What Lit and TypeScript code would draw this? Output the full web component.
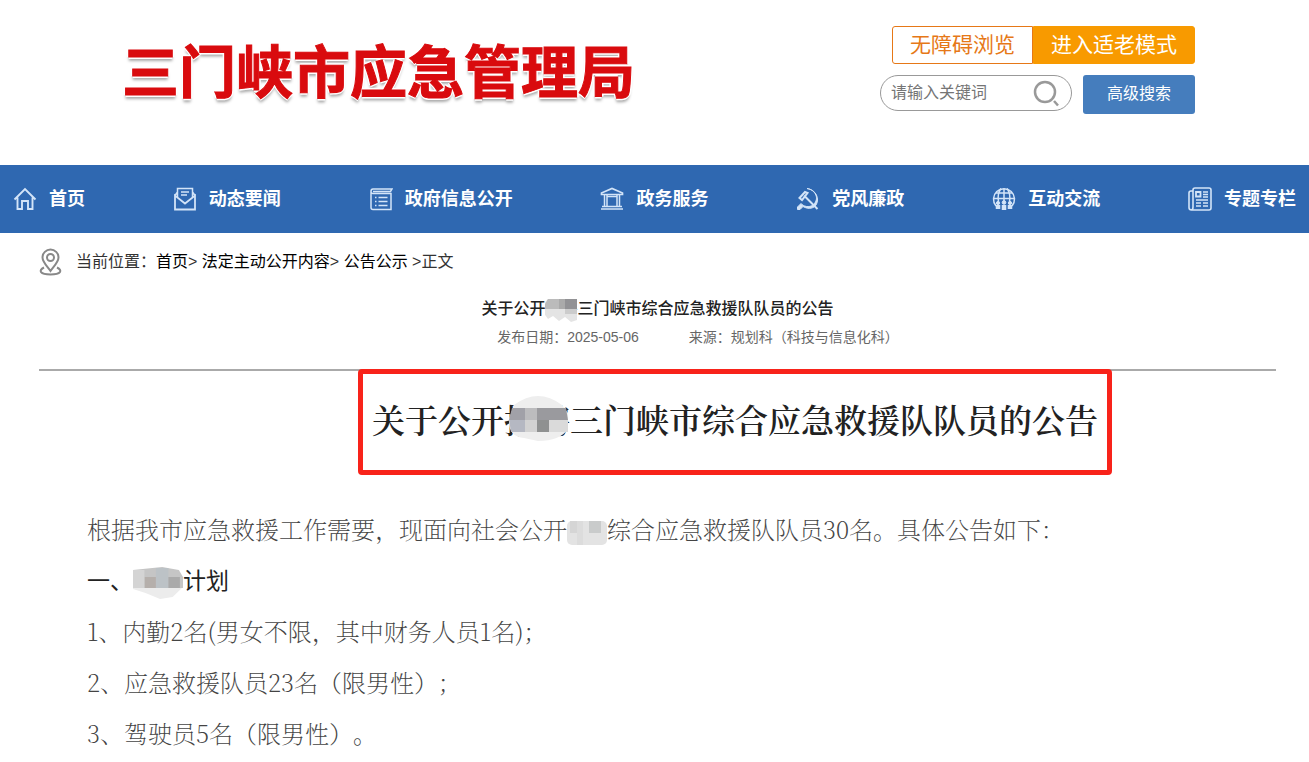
import { LitElement, html, css, svg } from "lit";
import { customElement } from "lit/decorators.js";

const icons = {
  home: svg`<path d="M1.500 12.500 12 2l10.500 10.500M4.500 10.500V22H9v-8h6v8h4.500V10.500" stroke-width="1.900"/>`,
  mail: svg`<path d="M2 8.500V22.500H22V8.500L12 16.500Z" stroke-width="1.800"/><path d="M2 8.500 4.500 5M22 8.500 19.500 5M4.500 10V1.500H19.500V10M8 5h8M8 8h6" stroke-width="1.500"/>`,
  list: svg`<path d="M2 3.500V20.500Q2 22.500 4 22.500H22V6.500H4Q2 6.500 2 4.500Q2 2 4 2H23L21.500 4.500H4" stroke-width="1.500"/><path d="M6 10.500h1.500M6 14.500h1.500M6 18.500h1.500M9.500 10.500h9M9.500 14.500h9M9.500 18.500h9" stroke-width="1.500"/>`,
  hall: svg`<path d="M1.500 7.500V6L12 1.500 22.500 6V7.500Z" stroke-width="1.700"/><path d="M4.500 8v11M7 8v11M17 8v11M19.500 8v11M7 9.500h10M2 19.500h20M1 22h22" stroke-width="1.500"/>`,
  party: svg`<path d="M11 1.500C20 3 23.500 12 17.500 17.500C13 21.500 7 19 5 16.500L1.500 20V22.500H4L7 19.500C13 23 18 21 20 18C24 12 20 2.500 11 1.500Z" fill="currentColor" stroke-width="1"/><path d="M3.500 11 9 5l2.500 1-5.500 7ZM8 8.500 21.500 22" stroke-width="2"/>`,
  globe: svg`<path d="M4 19A10.500 10.500 0 1 1 20 19M1.500 11.500h21M12 1v13M3.500 6h17M9 1.500Q5 7 6.500 15M15 1.500Q19 7 17.500 15" stroke-width="1.500"/><circle cx="6" cy="16" r="1.600" fill="currentColor"/><circle cx="12" cy="15.500" r="1.800" fill="currentColor"/><circle cx="18" cy="16" r="1.600" fill="currentColor"/><path d="M6 18v4M12 18v5M18 18v4" stroke-width="4.500"/>`,
  news: svg`<path d="M5 4H3Q1 4 1 6V20.500Q1 23 3.500 23H21Q23 23 23 21V3Q23 1 21 1H7Q5 1 5 3V20Q5 23 3 23" stroke-width="1.600"/><path d="M8 5h4.500v4.500H8Z" stroke-width="1.800"/><path d="M15 5h5M15 7.500h5M15 10h5M8 13h12M8 16h5M15 16h5M8 19h5M15 19h5" stroke-width="1.300"/>`,
};

const navItems: [keyof typeof icons, string][] = [
  ["home", "首页"],
  ["mail", "动态要闻"],
  ["list", "政府信息公开"],
  ["hall", "政务服务"],
  ["party", "党风廉政"],
  ["globe", "互动交流"],
  ["news", "专题专栏"],
];

@customElement("app-root")
export class AppRoot extends LitElement {
  static styles = css`
    :host {
      display: block;
      background: #fff;
      color: #222;
      font-family: "Liberation Sans", "Noto Sans CJK SC", sans-serif;
      font-size: 16px;
      overflow-x: clip;
      text-spacing-trim: space-all;
    }
    * { box-sizing: border-box; }
    a { color: inherit; text-decoration: none; }
    svg { display: block; flex: none; }
    .header {
      display: flex;
      justify-content: space-between;
      align-items: flex-start;
      padding: 26px 114px 0 122px;
      min-height: 165px;
    }
    .logo {
      margin: 0;
      padding-top: 2px;
      color: #d90b0e;
      font: 700 57px/80px "Noto Sans CJK SC", sans-serif;
      white-space: nowrap;
      -webkit-text-stroke: 1px #d90b0e;
      text-shadow: 2px 0 #fff, -2px 0 #fff, 0 2px #fff, 0 -2px #fff, 0 4px 3px #aaa;
    }
    .tools { display: grid; gap: 11px; justify-items: end; }
    .modes { display: flex; }
    button {
      padding: 0;
      border: 0;
      font-family: inherit;
      cursor: pointer;
    }
    .mode {
      height: 38px;
      padding: 0 17px;
      border: 1px solid #e67817;
      border-radius: 3px 0 0 3px;
      background: #fff;
      color: #e67817;
      font-size: 21px;
      line-height: 34px;
    }
    .mode.senior {
      padding: 0 17px;
      border-color: #f89a00;
      border-radius: 0 3px 3px 0;
      background: #f89a00;
      color: #fff;
    }
    .search { display: flex; gap: 11px; align-items: flex-start; }
    .field {
      display: flex;
      align-items: center;
      width: 192px;
      height: 36px;
      padding: 0 11px 0 10px;
      border: 1px solid #999;
      border-radius: 18px;
    }
    .field input {
      flex: 1;
      min-width: 0;
      padding: 0;
      border: 0;
      outline: 0;
      background: none;
      font: inherit;
    }
    .field input::placeholder { color: #757575; opacity: 1; }
    .find { background: none; color: #999; }
    .advanced {
      width: 112px;
      height: 39px;
      padding-bottom: 5px;
      border-radius: 3px;
      background: #457dbd;
      color: #fff;
      font-size: 16px;
    }
    .nav {
      display: flex;
      justify-content: space-between;
      align-items: center;
      height: 68px;
      padding: 0 13px;
      background: #2f68b1;
      color: #fff;
      font-size: 18px;
      font-weight: 700;
      line-height: 24px;
      white-space: nowrap;
    }
    .nav a { display: flex; align-items: center; gap: 12px; }
    .nav svg { color: #d3e4f8; }
    .main { padding: 0 33px 0 39px; }
    .crumbs {
      display: flex;
      align-items: center;
      gap: 14px;
      padding-top: 15px;
      line-height: 28px;
      color: #333;
    }
    .crumbs a { color: #000; }
    .crumbs svg { color: #888; }
    .title {
      margin: 20px 0 0;
      font-size: 16px;
      font-weight: 500;
      line-height: 26px;
      text-align: center;
    }
    .meta {
      display: flex;
      justify-content: center;
      gap: 50px;
      padding: 3px 0 20px 81px;
      border-bottom: 2px solid #aaa;
      color: #666;
      font-size: 14px;
      line-height: 24px;
    }
    .banner {
      display: flex;
      justify-content: center;
      margin-top: -2px;
      padding-left: 155px;
    }
    .headline {
      margin: 0;
      padding: 21px 9px 27px;
      border: 5px solid #f8231a;
      border-radius: 4px;
      font: 600 33px/48px "Noto Serif CJK SC", "Noto Sans CJK SC", serif;
      white-space: nowrap;
    }
    .masked { position: relative; display: inline-block; }
    .masked svg {
      position: absolute;
      inset: 0;
      width: 100%;
      height: 100%;
    }
    .article {
      padding: 28px 48px 0;
      color: #444;
      font: 200 24px/51px "Noto Serif CJK SC", "Noto Sans CJK SC", serif;
    }
    .article p, .article h3 { margin: 0; }
    .article h3 {
      color: #222;
      font: 400 23px/51px "Noto Sans CJK SC", sans-serif;
    }
    .blot { display: inline-block; vertical-align: middle; }
  `;

  render() {
    return html`
      <header class="header">
        <h1 class="logo">三门峡市应急管理局</h1>
        <div class="tools">
          <div class="modes">
            <button class="mode">无障碍浏览</button>
            <button class="mode senior">进入适老模式</button>
          </div>
          <form class="search">
            <div class="field">
              <input type="text" aria-label="请输入关键词" placeholder="请输入关键词" />
              <button class="find" type="button" aria-label="搜索">
                <svg width="28" height="28" viewBox="0 0 28 28" fill="none" stroke="currentColor">
                  <circle cx="13" cy="13" r="10" stroke-width="2.500" />
                  <path d="m22 22 4 4.500" stroke-width="2.500" />
                </svg>
              </button>
            </div>
            <button class="advanced" type="button">高级搜索</button>
          </form>
        </div>
      </header>
      <nav class="nav">
        ${navItems.map(
          ([icon, label]) => html`<a href="#">
            <svg width="24" height="24" viewBox="0 0 24 24" fill="none" stroke="currentColor">${icons[icon]}</svg>${label}</a>`,
        )}
      </nav>
      <main class="main">
        <div class="crumbs">
          <svg width="23" height="28" viewBox="0 0 23 28" fill="none" stroke="currentColor" stroke-width="2">
            <path d="M11.500 23C8 18 3.500 14 3.500 9.500a8 8 0 0 1 16 0C19.500 14 15 18 11.500 23Z" />
            <circle cx="11.500" cy="9.500" r="3.500" />
            <path d="M5 19.500C-1 22.500 1 26.500 11.500 26.500S24 22.500 18 19.500" />
          </svg>
          <span>当前位置：<a href="#">首页</a>&gt; <a href="#">法定主动公开内容</a>&gt; <a href="#">公告公示</a> &gt;正文</span>
        </div>
        <h2 class="title">关于公开<span class="masked">招聘<svg viewBox="0 0 32 26" preserveAspectRatio="none">
          <path d="M-1 7 3 3H32V24L26 26 20 21 14 25 8 20 3 23-2 16Z" fill="#e4e4e4" />
          <path d="M3 3H14V13H0V8Z" fill="#bbb" /><path d="M14 3H20V13H14Z" fill="#aaa" />
          <path d="M20 3H32V13H20Z" fill="#929295" /><path d="M20 13H32V18H20Z" fill="#ccc" />
        </svg></span>三门峡市综合应急救援队队员的公告</h2>
        <div class="meta"><span>发布日期：2025-05-06</span><span>来源：规划科（科技与信息化科）</span></div>
        <div class="banner">
          <h2 class="headline">关于公开<span class="masked">招聘<svg viewBox="0 0 66 48">
            <path d="M10 10Q34-8 58 10L64 18V34Q56 46 34 46L20 43Q4 42 5 24Z" fill="#eee" />
            <path d="M8 13H21V25H5Z" fill="#a1a1a8" /><path d="M21 13H33V25H21Z" fill="#bcbcbe" />
            <path d="M33 13H62L64 25H33Z" fill="#9a9a9e" /><path d="M5 25H21V37H7Z" fill="#b5b8c2" />
            <path d="M21 25H33V37H21Z" fill="#d2d2d2" /><path d="M33 25H45V37H33Z" fill="#8f9191" />
            <path d="M45 25H64V37H45Z" fill="#dadada" />
          </svg></span>三门峡市综合应急救援队队员的公告</h2>
        </div>
        <article class="article">
          <p>根据我市应急救援工作需要，现面向社会公开<svg class="blot" width="40" height="24" viewBox="0 0 40 24" aria-hidden="true">
            <rect width="40" height="24" rx="5" fill="#e3e3e3" /><path d="M3 0H10V12H3Z" fill="#d5d5d5" />
            <path d="M22 0H34V12H22Z" fill="#c9cbcb" /><path d="M10 0H16V24H10Z" fill="#dcdcdc" />
          </svg>综合应急救援队队员30名。具体公告如下：</p>
          <h3>一、<svg class="blot" width="50" height="32" viewBox="0 0 48 32" preserveAspectRatio="none" aria-hidden="true">
            <path d="M0 12H48V20L38 30 26 32 12 26 0 22Z" fill="#ececec" />
            <path d="M0 3 28 0 44 3 48 10V21H0Z" fill="#c5c5c5" /><path d="M11 10H22V21H11Z" fill="#b5afab" />
            <path d="M22 1H34V21H22Z" fill="#bcc2c6" /><path d="M34 10H45V21H34Z" fill="#aaa" />
            <path d="M0 3H11V21H0Z" fill="#d4d4d4" />
          </svg>计划</h3>
          <p>1、内勤2名(男女不限，其中财务人员1名)；</p>
          <p>2、应急救援队员23名（限男性）；</p>
          <p>3、驾驶员5名（限男性）。</p>
        </article>
      </main>
    `;
  }
}
